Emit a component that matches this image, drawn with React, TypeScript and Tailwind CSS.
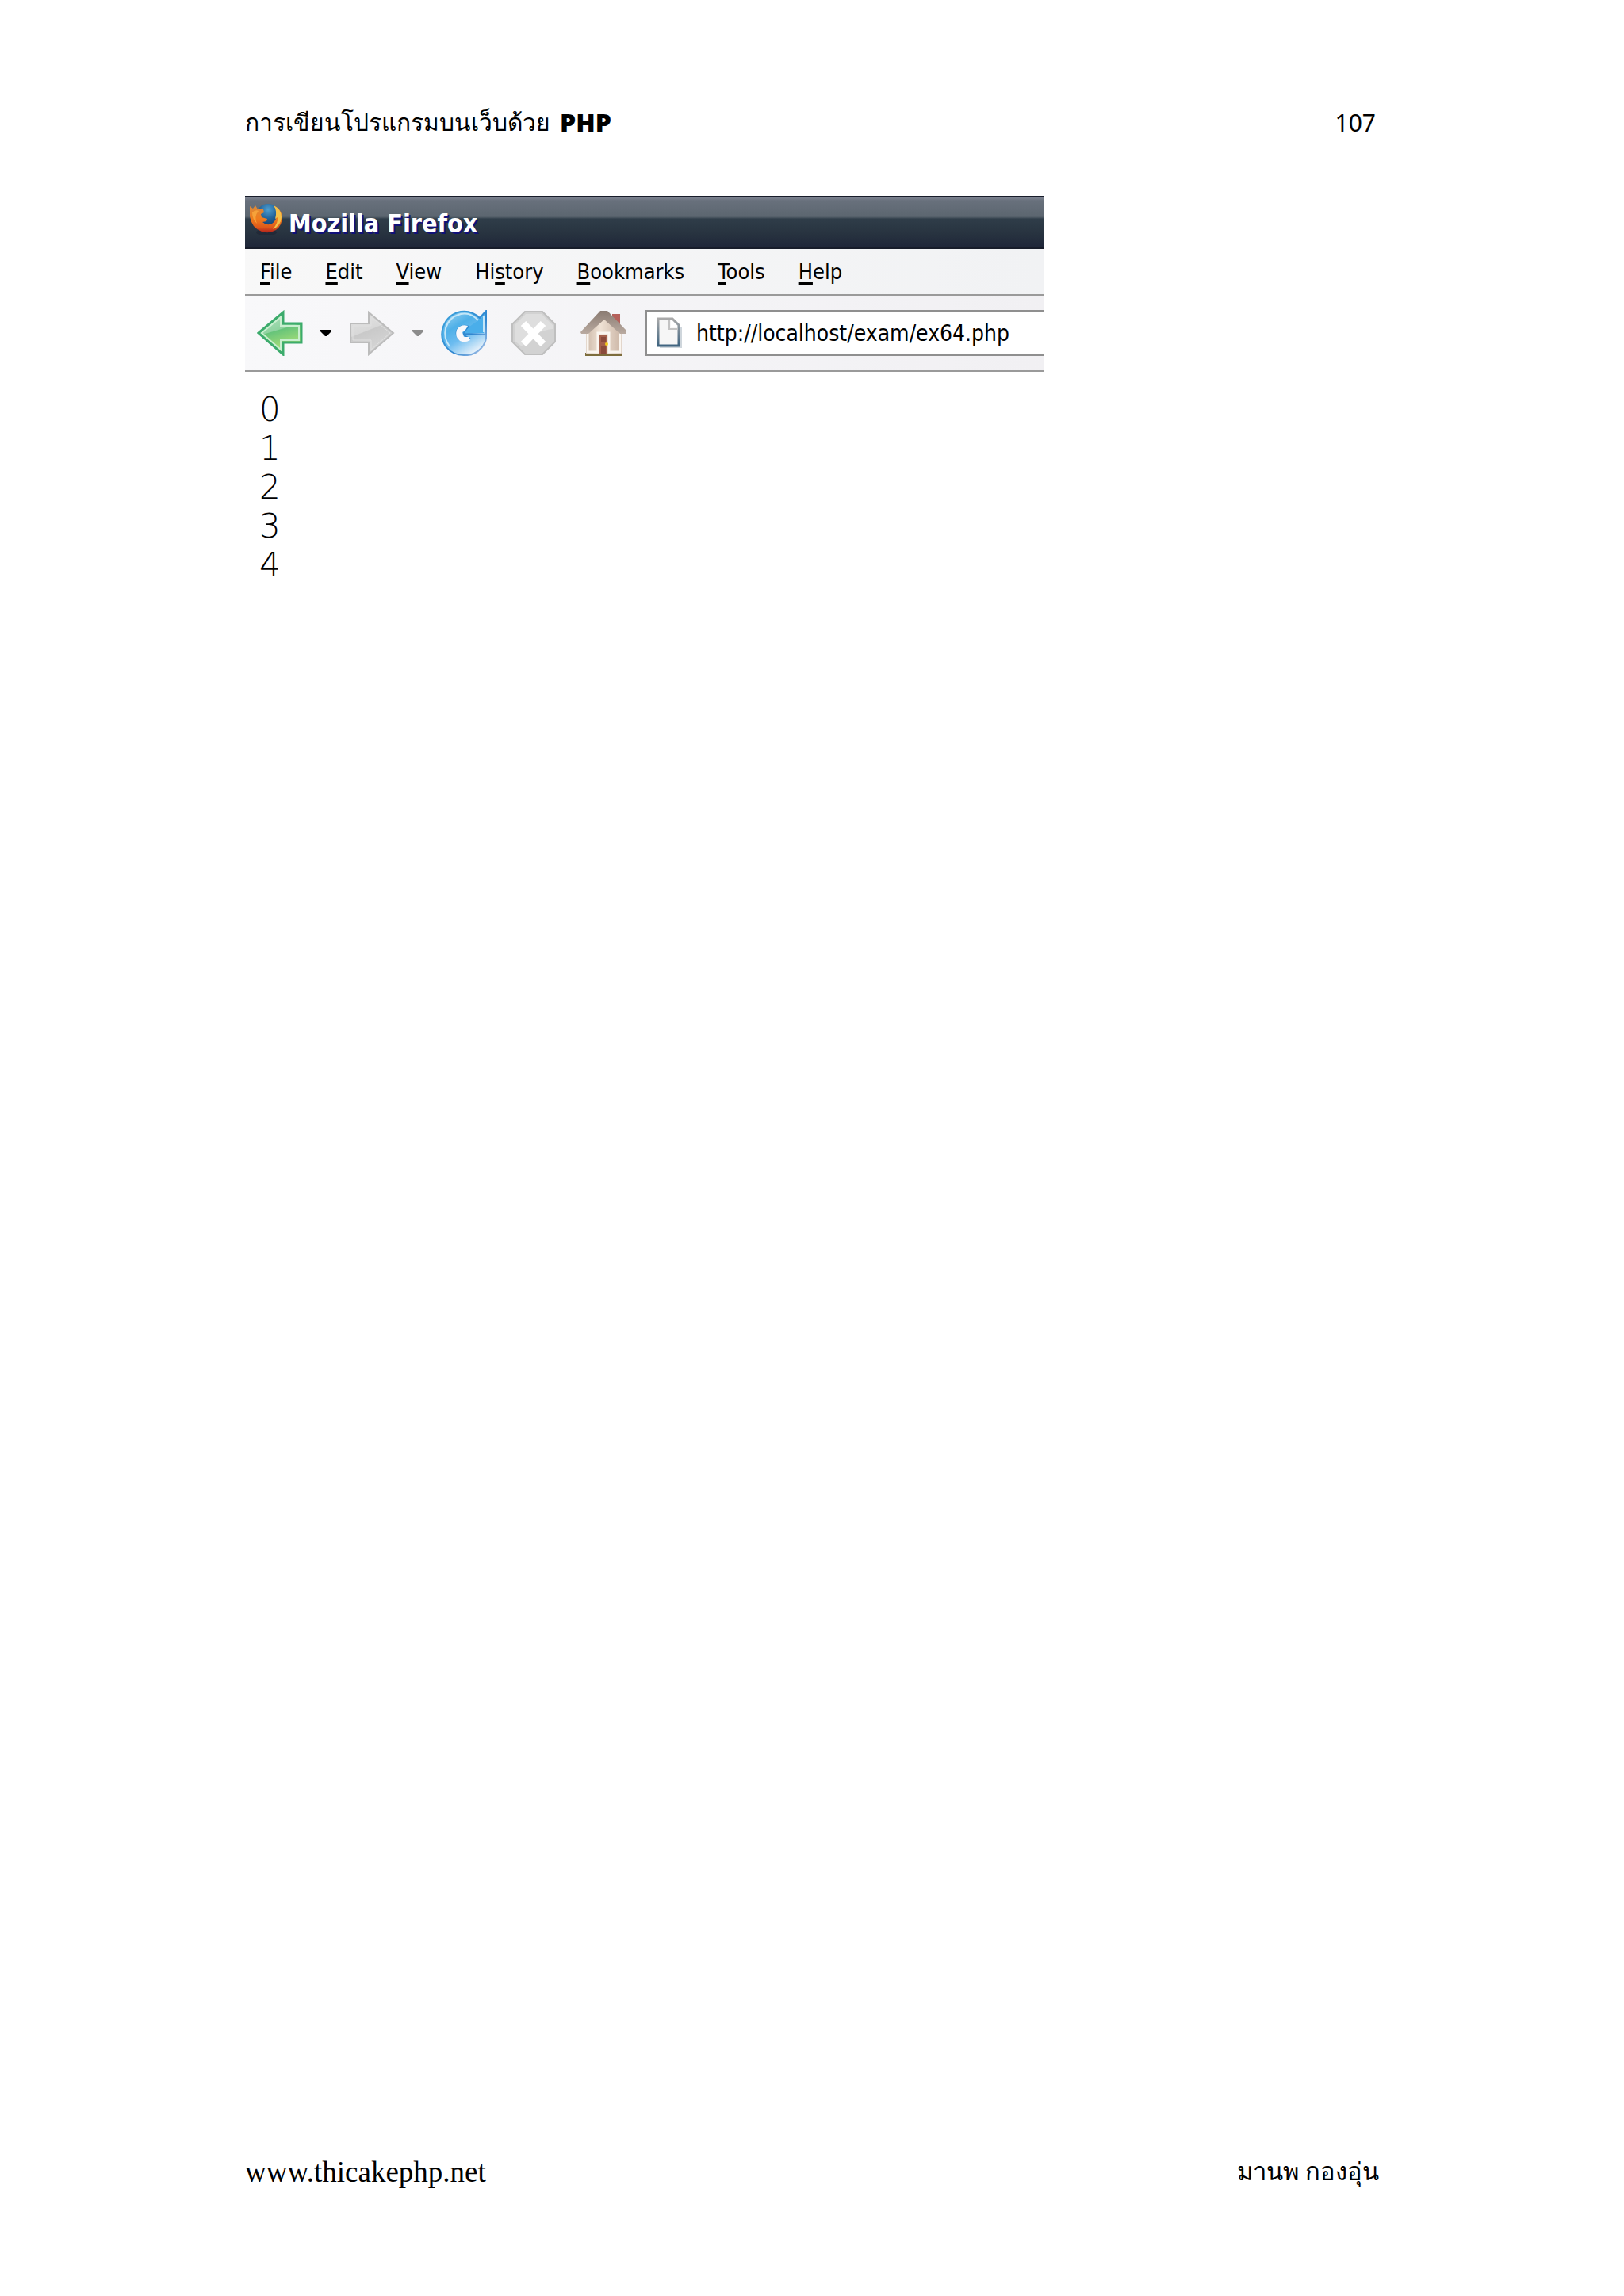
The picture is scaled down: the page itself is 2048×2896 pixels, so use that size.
import { FC } from "react";

interface MenuItem {
  id: number;
  before: string;
  key: string;
  after: string;
}

const menu: MenuItem[] = [
  { id: 1, before: "", key: "F", after: "ile" },
  { id: 2, before: "", key: "E", after: "dit" },
  { id: 3, before: "", key: "V", after: "iew" },
  { id: 4, before: "Hi", key: "s", after: "tory" },
  { id: 5, before: "", key: "B", after: "ookmarks" },
  { id: 6, before: "", key: "T", after: "ools" },
  { id: 7, before: "", key: "H", after: "elp" },
];

const output = [0, 1, 2, 3, 4];

const FirefoxIcon: FC = () => (
  <svg viewBox="0 0 42 42" className="h-[42px] w-[42px]" aria-hidden="true">
    <defs>
      <linearGradient id="fox" x1="0" y1="0" x2="0" y2="1">
        <stop offset="0" stopColor="#d98a3c" />
        <stop offset="0.5" stopColor="#f07c1c" />
        <stop offset="0.8" stopColor="#e05a1a" />
        <stop offset="1" stopColor="#b0201c" />
      </linearGradient>
      <radialGradient id="globe" cx="0.5" cy="0.25" r="0.8">
        <stop offset="0" stopColor="#4f9fd0" />
        <stop offset="0.5" stopColor="#1f5f96" />
        <stop offset="1" stopColor="#12305c" />
      </radialGradient>
    </defs>
    <ellipse cx="22" cy="37" rx="13" ry="4" fill="#1b2030" opacity="0.5" />
    <circle cx="24" cy="16" r="15" fill="url(#globe)" />
    <path
      d="M1 4 L5 7 L8 3 L11 8 L18 8 L19 12 L15 14 L16 18 L23 20 L22 23 L17 24 Q22 29 29 26 Q35 22 35 14 Q35 8 31 3 Q40 7 42 17 Q42 28 34 34 Q26 39 16 36 Q3 31 1 17 Z"
      fill="url(#fox)"
    />
    <path
      d="M31 3 Q41 8 41 18 Q40 29 30 33 Q37 25 36 18 L33 20 Q36 10 31 3 Z"
      fill="#f3c04a"
    />
    <path d="M4 12 Q8 8 12 10 Q6 17 10 26 Q4 20 4 12 Z" fill="#f6a23a" />
  </svg>
);

const BackIcon: FC = () => (
  <svg viewBox="0 0 58 58" className="h-[58px] w-[58px]" aria-hidden="true">
    <defs>
      <linearGradient id="back" x1="0" y1="0" x2="0.3" y2="1">
        <stop offset="0" stopColor="#b5e3c6" />
        <stop offset="0.5" stopColor="#8fd3a0" />
        <stop offset="0.52" stopColor="#66c47a" />
        <stop offset="1" stopColor="#b4e377" />
      </linearGradient>
    </defs>
    <path
      d="M2 29 L33 3 V17 H56 V41 H33 V56 Z"
      fill="url(#back)"
      stroke="#3cab6c"
      strokeWidth="3"
    />
    <path
      d="M6 29 L30 9 V20 H53 V38 H30 V50 Z"
      fill="none"
      stroke="#c9efcf"
      strokeWidth="2"
    />
  </svg>
);

const ForwardIcon: FC = () => (
  <svg viewBox="0 0 58 58" className="h-[58px] w-[58px]" aria-hidden="true">
    <defs>
      <linearGradient id="forward" x1="0" y1="0" x2="0.4" y2="1">
        <stop offset="0" stopColor="#e3e3e3" />
        <stop offset="0.5" stopColor="#d8d8d8" />
        <stop offset="0.52" stopColor="#c9c9c9" />
        <stop offset="1" stopColor="#d6d6d6" />
      </linearGradient>
    </defs>
    <path
      d="M56 29 L25 3 V17 H2 V41 H25 V56 Z"
      fill="url(#forward)"
      stroke="#bcbcbc"
      strokeWidth="2"
    />
    <path
      d="M52 29 L28 9 V20 H5 V38 H28 V50 Z"
      fill="none"
      stroke="#e0e0e0"
      strokeWidth="1"
    />
  </svg>
);

const ReloadIcon: FC = () => (
  <svg viewBox="0 0 58 58" className="h-[58px] w-[58px]" aria-hidden="true">
    <defs>
      <linearGradient id="reload" x1="0" y1="0" x2="0.6" y2="1">
        <stop offset="0" stopColor="#a9d9f2" />
        <stop offset="0.4" stopColor="#4fb0e8" />
        <stop offset="0.65" stopColor="#6cbcf0" />
        <stop offset="1" stopColor="#e4f0fa" />
      </linearGradient>
      <linearGradient id="rim" x1="0" y1="0" x2="1" y2="1">
        <stop offset="0" stopColor="#3ba3dc" />
        <stop offset="0.6" stopColor="#2f86d0" />
        <stop offset="1" stopColor="#b5c8ea" />
      </linearGradient>
    </defs>
    <path
      d="M57 1 V31 H28 L36 36 Q28 42 22 36 Q17 29 22 23 Q28 18 35 21 L28 30 L57 31 Q58 40 51 48 Q42 58 29 57 Q15 57 7 47 Q-2 35 3 21 Q9 5 25 2 Q39 0 49 10 Z"
      fill="url(#reload)"
      stroke="url(#rim)"
      strokeWidth="2"
    />
    <path
      d="M48 14 Q38 2 25 5 Q10 9 6 23 Q3 36 11 46"
      fill="none"
      stroke="#c4e6f8"
      strokeWidth="2"
    />
    <path d="M36 21 L54 8 V29 H30 Z" fill="#4aaeea" />
    <path d="M54 8 V28" stroke="#c4e6f8" strokeWidth="2" />
    <path
      d="M34 20 Q25 17 20 25 Q17 34 24 39 Q30 42 37 38 L35 34 L29 34 L27 28 L31 25 Z"
      fill="#f8f8fb"
    />
  </svg>
);

const StopIcon: FC = () => (
  <svg viewBox="0 0 58 58" className="h-[58px] w-[58px]" aria-hidden="true">
    <path
      d="M18 2 H40 L56 18 V40 L40 56 H18 L2 40 V18 Z"
      fill="#d2d2d2"
      stroke="#bfbfbf"
      strokeWidth="2"
    />
    <path
      d="M19 5 H39 L53 19 V24 Q30 26 14 46 L5 39 V19 Z"
      fill="#dedede"
    />
    <path
      d="M16 17 L41 43 M41 17 L16 43"
      stroke="#ffffff"
      strokeWidth="9"
      fill="none"
    />
  </svg>
);

const HomeIcon: FC = () => (
  <svg viewBox="0 0 58 58" className="h-[58px] w-[58px]" aria-hidden="true">
    <defs>
      <linearGradient id="wall" x1="0" y1="0" x2="1" y2="0">
        <stop offset="0" stopColor="#cdb9a9" />
        <stop offset="0.4" stopColor="#efe2d5" />
        <stop offset="1" stopColor="#cbb5a5" />
      </linearGradient>
      <linearGradient id="roof" x1="0" y1="0" x2="0" y2="1">
        <stop offset="0" stopColor="#8a7b72" />
        <stop offset="1" stopColor="#b9aaa0" />
      </linearGradient>
    </defs>
    <path d="M40 5 H50 V22 L40 12 Z" fill="#b5605a" />
    <path d="M6 54 H53 V58 H6 Z" fill="#7d6d3c" />
    <path d="M7 27 L30 5 L52 27 V55 H7 Z" fill="url(#wall)" />
    <path
      d="M9 28 V53 H22 V29 H36 V53 H50 V28"
      fill="none"
      stroke="#faf5ef"
      strokeWidth="3"
    />
    <path
      d="M0 28 L25 1 H34 L58 26 V30 H50 L30 12 L10 30 H1 Z"
      fill="url(#roof)"
    />
    <path d="M24 31 H34 V56 H24 Z" fill="#a4604c" />
    <path d="M26 34 H32 V41 H26 Z M26 45 H32 V55 H26 Z" fill="#8a4a3b" />
    <circle cx="33" cy="43" r="2" fill="#f2c91d" />
  </svg>
);

const PageIcon: FC = () => (
  <svg viewBox="0 0 32 40" className="h-10 w-8 shrink-0" aria-hidden="true">
    <defs>
      <linearGradient id="edge" x1="0" y1="0" x2="0" y2="1">
        <stop offset="0" stopColor="#a9a9a9" />
        <stop offset="1" stopColor="#3f6480" />
      </linearGradient>
    </defs>
    <path d="M4 38 H31 V12" fill="none" stroke="#cfd6dc" strokeWidth="2" />
    <path
      d="M2 2 H20 L28 10 V36 H2 Z"
      fill="#f6f6f6"
      stroke="url(#edge)"
      strokeWidth="3"
    />
    <path d="M16 3 V15 H27" fill="none" stroke="#c3c3c3" strokeWidth="2" />
    <path d="M18 3 L26 11 V13 H18 Z" fill="#ffffff" />
  </svg>
);

const Caret: FC<{ className: string }> = ({ className }) => (
  <svg viewBox="0 0 14 8" className={className} aria-hidden="true">
    <path d="M0 0 H14 V2 L8 8 H6 L0 2 Z" fill="currentColor" />
  </svg>
);

const Browser: FC = () => {
  return (
    <section className="w-[70.5%] font-['DejaVu_Sans_Condensed','DejaVu_Sans',sans-serif]">
      <div className="flex h-[67px] items-start border-y-2 border-[#171c2a] bg-[linear-gradient(to_bottom,#7c8290_0,#68707c_4px,#5c6670_38%,#4c5862_40%,#2f3d49_43%,#27323f_75%,#1f2639_100%)] pt-[7px] pl-[5px]">
        <FirefoxIcon />
        <h1 className="ml-2 text-[32px] leading-[52px] font-bold text-white [text-shadow:2px_2px_0_#10107a]">
          Mozilla Firefox
        </h1>
      </div>
      <nav className="flex h-[59px] gap-[42px] border-b-2 border-[#9a9a9a] bg-linear-to-r from-[#f8f8f8] to-[#f1f2f4] pl-[19px] text-[27px]">
        {menu.map((el) => (
          <button key={el.id} type="button" className="leading-[58px]">
            {el.before}
            <span className="underline decoration-3 underline-offset-4">
              {el.key}
            </span>
            {el.after}
          </button>
        ))}
      </nav>
      <div className="flex h-24 items-center border-b-2 border-[#9a9a9a] bg-linear-to-r from-[#f8f8fa] to-[#f1f0f3]">
        <button type="button" aria-label="Back" className="ml-[15px]">
          <BackIcon />
        </button>
        <button type="button" aria-label="Back history" className="ml-[22px]">
          <Caret className="h-2 w-[14px] text-black" />
        </button>
        <button type="button" aria-label="Forward" className="ml-[22px]">
          <ForwardIcon />
        </button>
        <button
          type="button"
          aria-label="Forward history"
          className="ml-[22px]"
        >
          <Caret className="h-2 w-[14px] text-[#8c8c8c]" />
        </button>
        <button type="button" aria-label="Reload" className="ml-[22px]">
          <ReloadIcon />
        </button>
        <button type="button" aria-label="Stop" className="ml-[30px]">
          <StopIcon />
        </button>
        <button type="button" aria-label="Home" className="ml-[30px]">
          <HomeIcon />
        </button>
        <div className="ml-[23px] flex h-[58px] flex-1 items-center border-y-3 border-l-3 border-[#8f8f8f] bg-white pl-3">
          <PageIcon />
          <input
            type="text"
            aria-label="Address"
            defaultValue="http://localhost/exam/ex64.php"
            className="ml-[18px] w-full min-w-0 pt-[2px] text-[28px] outline-none"
          />
        </div>
      </div>
      <div className="pt-[23px] pl-[18px] font-['DejaVu_Sans',sans-serif] text-[42px] leading-[49px] font-extralight">
        {output.map((el) => (
          <p key={el}>{el}</p>
        ))}
      </div>
    </section>
  );
};

const App: FC = () => {
  return (
    <div className="flex min-h-screen flex-col bg-white px-[309px] pt-[129px] pb-[130px] text-black">
      <header className="flex items-center justify-between pr-1 font-['Noto_Sans',sans-serif] text-[30px] leading-[52px]">
        <p className="flex gap-3">
          <span className="font-['Liberation_Serif',serif]">
            การเขียนโปรแกรมบนเว็บด้วย
          </span>
          <b className="text-[32px] font-black">PHP</b>
        </p>
        <p>107</p>
      </header>
      <main className="mt-[66px] flex-1">
        <Browser />
      </main>
      <footer className="flex items-center justify-between font-['Liberation_Serif',serif] leading-[52px]">
        <a href="http://www.thicakephp.net" className="text-[37px]">
          www.thicakephp.net
        </a>
        <p className="text-[31px]">มานพ กองอุ่น</p>
      </footer>
    </div>
  );
};

export default App;
